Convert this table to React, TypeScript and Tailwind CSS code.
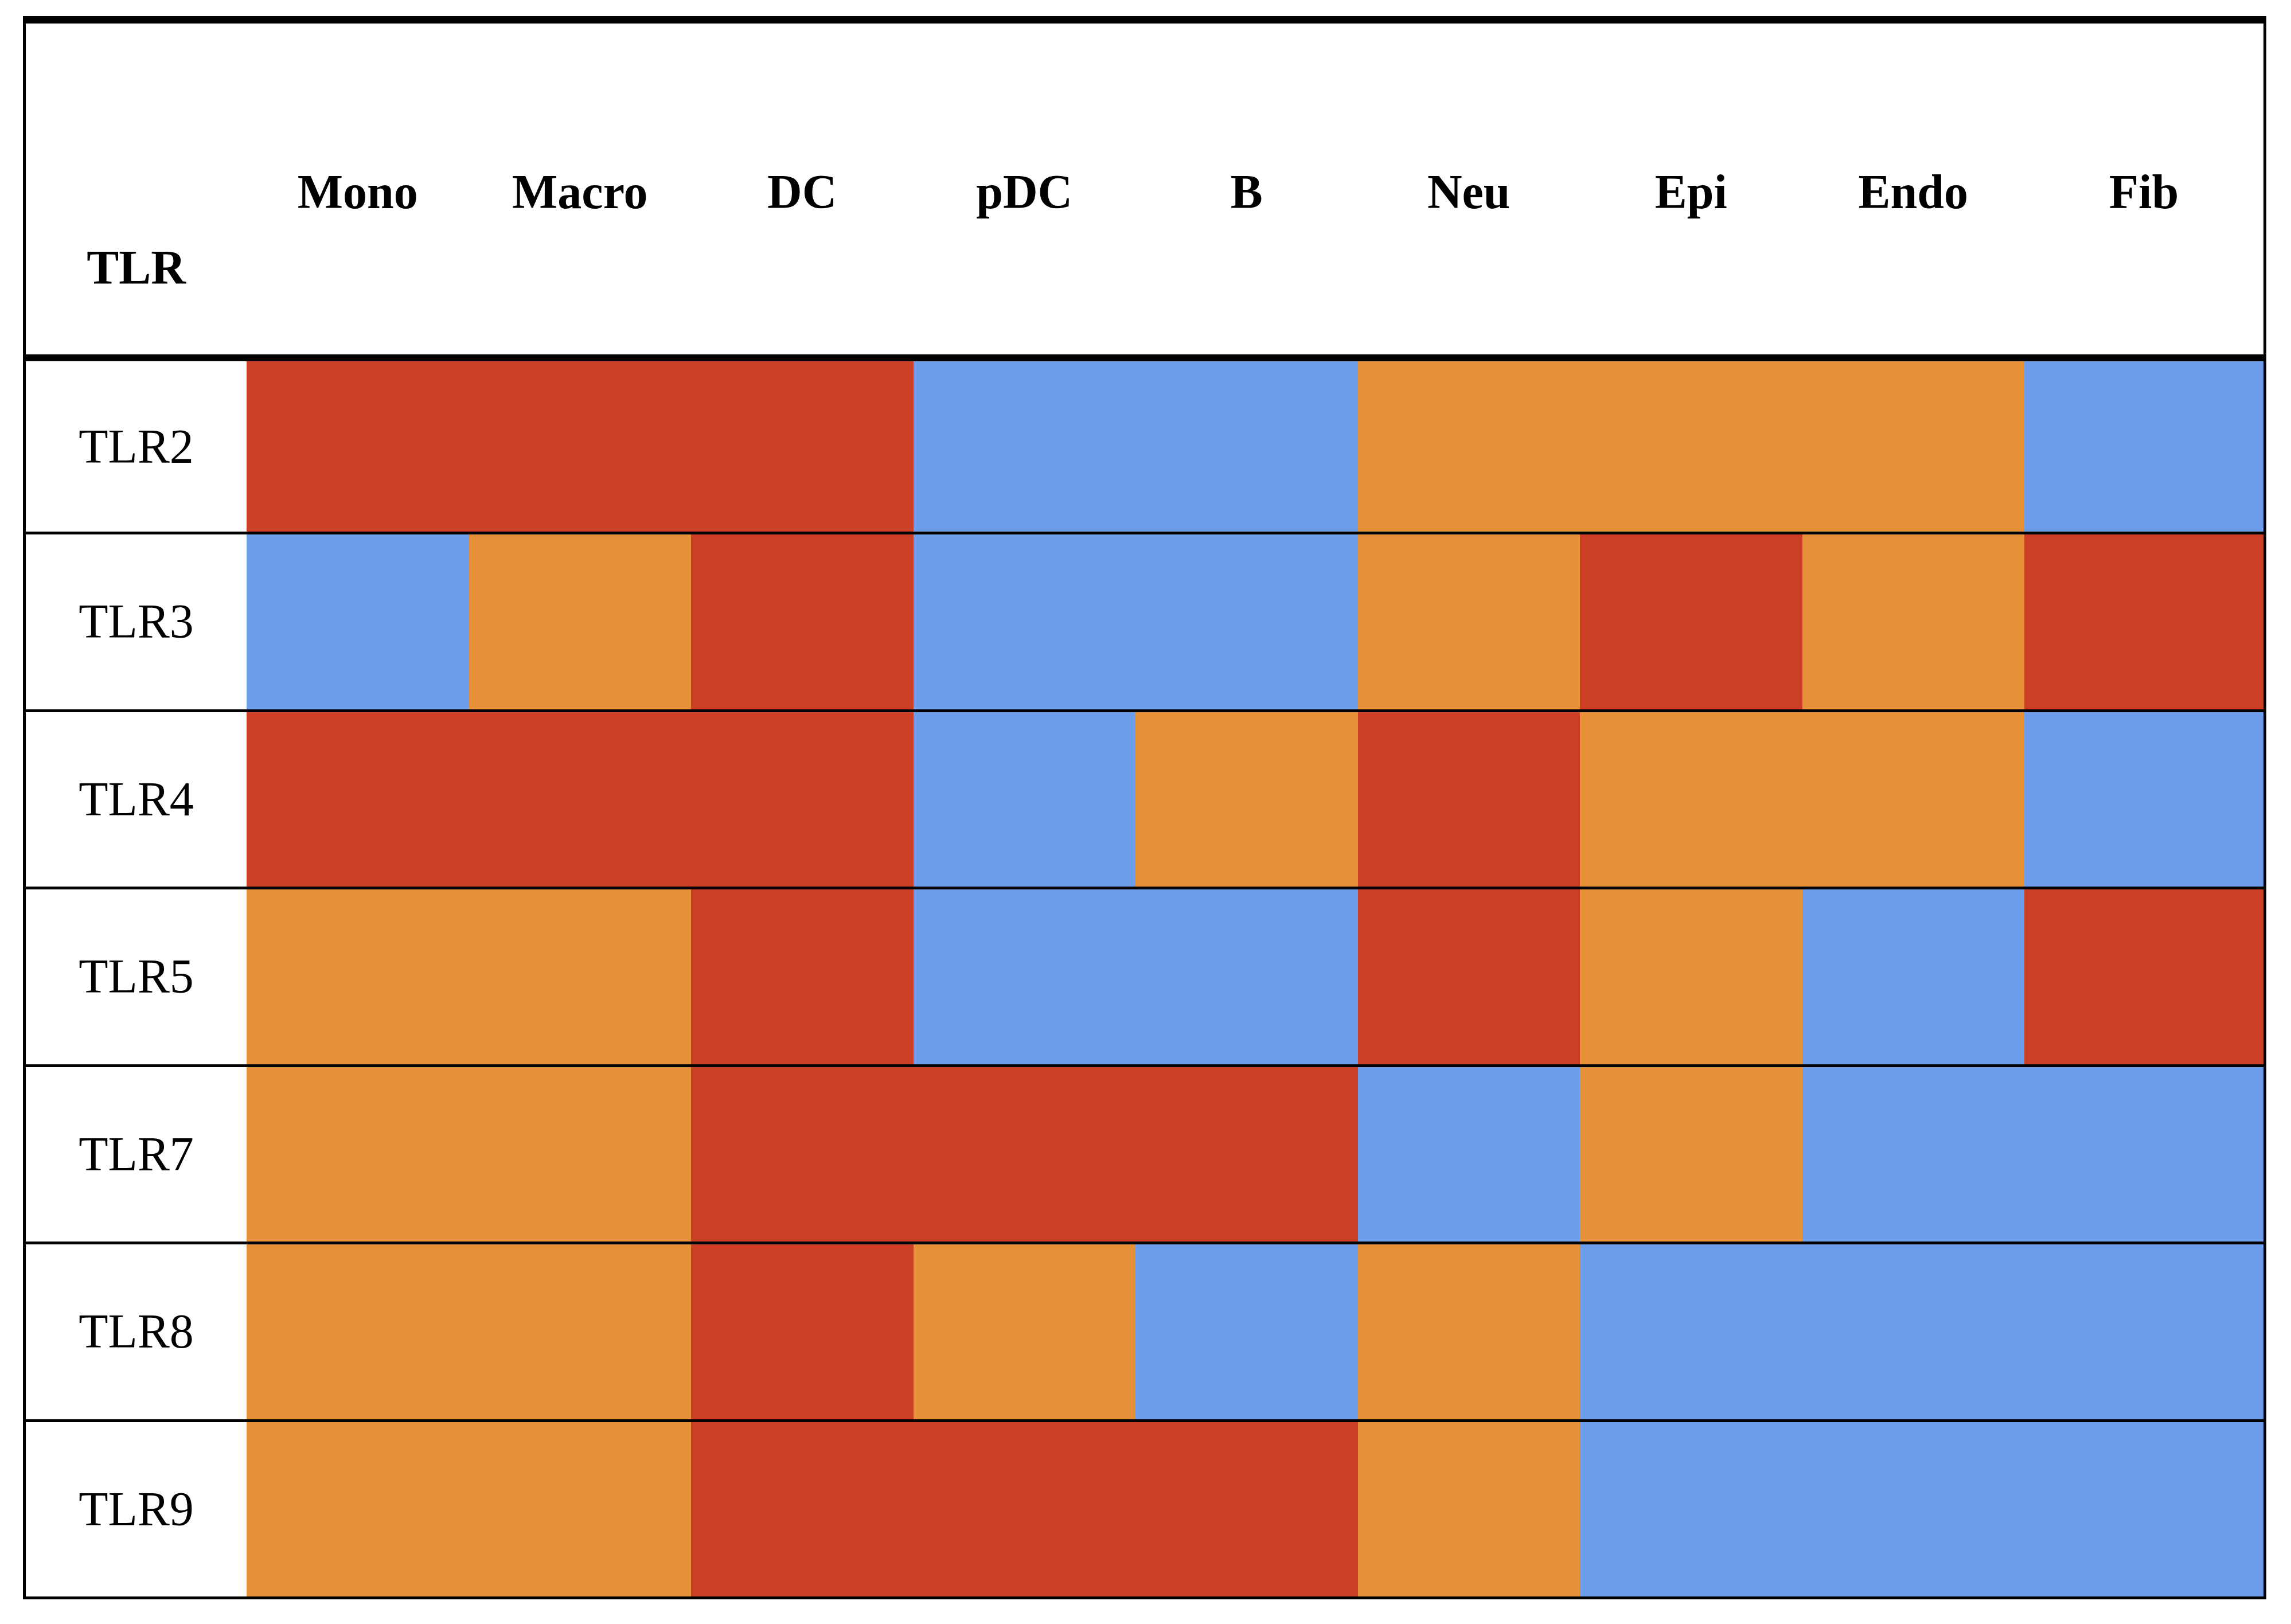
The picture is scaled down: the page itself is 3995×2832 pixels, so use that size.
const cols = ["Mono", "Macro", "DC", "pDC", "B", "Neu", "Epi", "Endo", "Fib"];

// R = red, B = blue, O = orange
const rows: { name: string; cells: string }[] = [
  { name: "TLR2", cells: "RRRBBOOOB" },
  { name: "TLR3", cells: "BORBBOROR" },
  { name: "TLR4", cells: "RRRBOROOB" },
  { name: "TLR5", cells: "OORBBROBR" },
  { name: "TLR7", cells: "OORRRBOBB" },
  { name: "TLR8", cells: "OOROBOBBB" },
  { name: "TLR9", cells: "OORRROBBB" },
];

const fill: Record<string, string> = {
  R: "bg-[#cb4025]",
  B: "bg-[#6d9eeb]",
  O: "bg-[#e69138]",
};

const grid = "grid grid-cols-[385px_repeat(8,387.5px)_417px]";

export default function App() {
  return (
    <div
      className="w-[3995px] h-[2832px] bg-white pt-[28px] pl-[40px] text-black"
      style={{ fontFamily: '"Liberation Serif", "Times New Roman", serif' }}
    >
      <div className="w-[3912px] border-t-[13px] border-x-[5px] border-b-[5px] border-black">
        {/* header */}
        <div className={`${grid} h-[589px] border-b-[12px] border-black`}>
          <div className="flex flex-col justify-end items-center pb-[109px]">
            <span className="text-[84px] leading-none font-bold">TLR</span>
          </div>
          {cols.map((c) => (
            <div key={c} className="flex items-center justify-center pt-[10px]">
              <span className="text-[84px] leading-none font-bold">{c}</span>
            </div>
          ))}
        </div>

        {/* body */}
        <div className="flex flex-col h-[2154px]">
          {rows.map((r, i) => (
            <div
              key={r.name}
              className={`${grid} ${i === 0 ? "h-[297px] shrink-0" : "flex-1 border-t-[5px] border-black"}`}
            >
              <div className="flex items-center justify-center">
                <span className="text-[84px] leading-none">{r.name}</span>
              </div>
              {r.cells.split("").map((k, j) => (
                <div key={j} className={fill[k]} />
              ))}
            </div>
          ))}
        </div>
      </div>
    </div>
  );
}
